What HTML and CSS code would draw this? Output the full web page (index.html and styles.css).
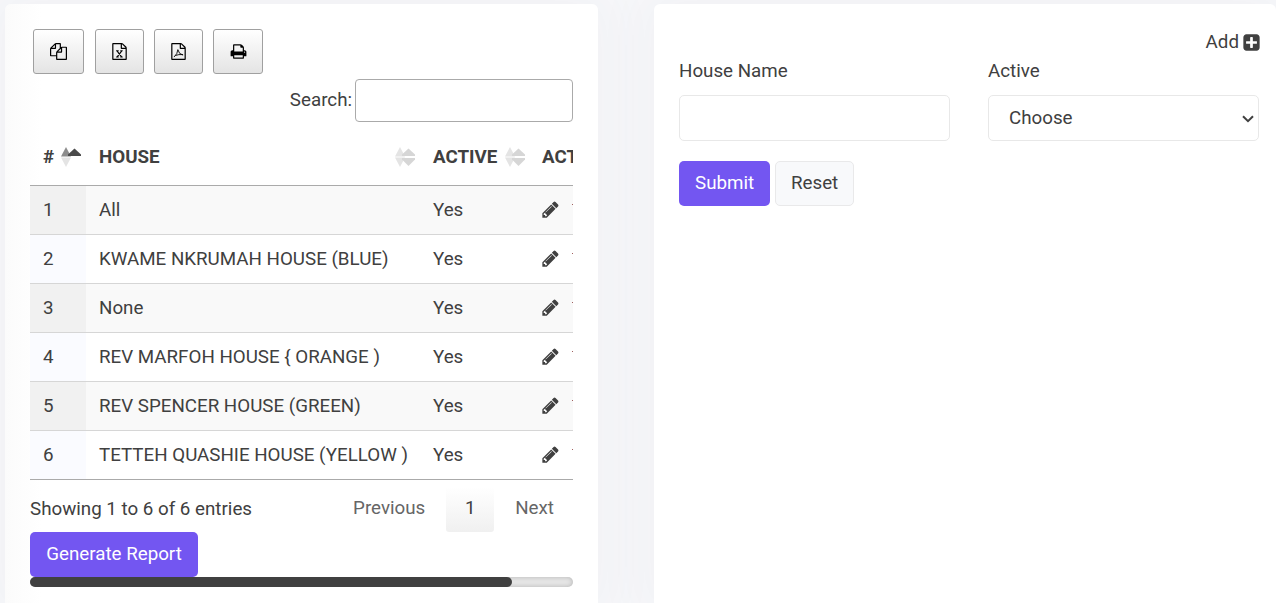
FILE: index.html
```html
<!DOCTYPE html>
<html lang="en">
<head>
<meta charset="utf-8">
<title>Houses</title>
<link rel="stylesheet" href="styles.css">
</head>
<body>
<svg width="0" height="0" class="defs" aria-hidden="true">
  <symbol id="pencil" viewBox="0 0 1792 1792"><path d="M491 1536l91-91-235-235-91 91v107h128v128h107zm523-928q0-22-22-22-10 0-17 7l-542 542q-7 7-7 17 0 22 22 22 10 0 17-7l542-542q7-7 7-17zm-54-192l416 416-832 832h-416v-416zm683 96q0 53-37 90l-166 166-416-416 166-165q36-38 90-38 53 0 91 38l235 234q37 39 37 91z"/></symbol>
  <symbol id="file" viewBox="0 0 1792 1792"><path d="M1596 380q28 28 48 76t20 88v1152q0 40-28 68t-68 28h-1344q-40 0-68-28t-28-68v-1600q0-40 28-68t68-28h896q40 0 88 20t76 48zm-444-244v376h376q-10-29-22-41l-313-313q-12-12-41-22zm384 1528v-1024h-416q-40 0-68-28t-28-68v-416h-768v1536h1280z"/></symbol>
  <symbol id="sort" viewBox="0 0 22 22"><path class="t2" d="M6 21l5-9.500H1z"/><path class="t4" d="M14.500 20L21 13.500V12H8v1.500z"/><path class="t1" d="M6 1l5 9.500H1z"/><path class="t3" d="M14.500 2.500l6.500 6v1.500H8V8.500z"/></symbol>
  <symbol id="sort-asc" viewBox="0 0 22 22"><path fill="#e4e4e4" d="M6 21l5-9.500H1z"/><path fill="#8c8c8c" d="M6 1l5 9.500H1z"/><path fill="#4a4a4a" d="M14.500 2.500l6.500 6v1.500H8V8.500z"/></symbol>
</svg>
<main class="page">
  <section class="card list-card">
    <div class="tools">
      <button class="tool wide"><svg viewBox="0 0 1792 1792"><path d="M1696 384q40 0 68 28t28 68v1216q0 40-28 68t-68 28h-960q-40 0-68-28t-28-68v-288h-544q-40 0-68-28t-28-68v-672q0-40 20-88t48-76l408-408q28-28 76-48t88-20h416q40 0 68 28t28 68v328q68-40 128-40h416zm-544 213l-299 299h299v-299zm-640-384l-299 299h299v-299zm196 647l316-316v-416h-384v416q0 40-28 68t-68 28h-416v640h512v-256q0-40 20-88t48-76zm956 804v-1152h-384v416q0 40-28 68t-68 28h-416v640h896z"/></svg></button>
      <button class="tool"><svg viewBox="0 0 1792 1792"><use href="#file"/><path class="line" d="M630 820L1140 1480M1140 820L630 1480M540 820h270M980 820h250M540 1480h270M980 1480h250"/></svg></button>
      <button class="tool"><svg viewBox="0 0 1792 1792"><use href="#file"/><path class="line thin" d="M830 700Q800 1150 420 1480M830 700Q920 1180 1380 1280M560 1320Q900 1180 1380 1220"/></svg></button>
      <button class="tool print"><svg viewBox="0 0 1792 1792"><path d="M448 1536h896v-256h-896v256zm0-640h896v-384h-160q-40 0-68-28t-28-68v-160h-640v640zm1152 64q0-26-19-45t-45-19-45 19-19 45 19 45 45 19 45-19 19-45zm128 0v416q0 13-9.500 22.500t-22.500 9.500h-224v160q0 40-28 68t-68 28h-960q-40 0-68-28t-28-68v-160h-224q-13 0-22.500-9.500t-9.500-22.500v-416q0-79 56.500-135.500t135.500-56.500h64v-544q0-40 28-68t68-28h672q40 0 88 20t76 48l152 152q28 28 48 76t20 88v256h64q79 0 135.500 56.500t56.500 135.500z"/></svg></button>
    </div>
    <label class="search"><span>Search:</span><input type="text"></label>
    <div class="scroller">
      <table>
        <colgroup><col class="c-num"><col class="c-house"><col class="c-active"><col class="c-action"></colgroup>
        <thead><tr>
          <th><span class="head">#<svg class="sort"><use href="#sort-asc"/></svg></span></th>
          <th><span class="head">HOUSE<svg class="sort"><use href="#sort"/></svg></span></th>
          <th><span class="head">ACTIVE<svg class="sort"><use href="#sort"/></svg></span></th>
          <th>ACTION</th>
        </tr></thead>
        <tbody>
          <tr><td>1</td><td>All</td><td>Yes</td><td><span class="acts"><svg><use href="#pencil"/></svg><i></i></span></td></tr>
          <tr><td>2</td><td>KWAME NKRUMAH HOUSE (BLUE)</td><td>Yes</td><td><span class="acts"><svg><use href="#pencil"/></svg><i></i></span></td></tr>
          <tr><td>3</td><td>None</td><td>Yes</td><td><span class="acts"><svg><use href="#pencil"/></svg><i></i></span></td></tr>
          <tr><td>4</td><td>REV MARFOH HOUSE { ORANGE )</td><td>Yes</td><td><span class="acts"><svg><use href="#pencil"/></svg><i></i></span></td></tr>
          <tr><td>5</td><td>REV SPENCER HOUSE (GREEN)</td><td>Yes</td><td><span class="acts"><svg><use href="#pencil"/></svg><i></i></span></td></tr>
          <tr><td>6</td><td>TETTEH QUASHIE HOUSE (YELLOW )</td><td>Yes</td><td><span class="acts"><svg><use href="#pencil"/></svg><i></i></span></td></tr>
        </tbody>
      </table>
    </div>
    <div class="foot">
      <span class="info">Showing 1 to 6 of 6 entries</span>
      <nav class="pager"><a class="prev">Previous</a><a class="current">1</a><a class="next">Next</a></nav>
    </div>
    <button class="btn primary report">Generate Report</button>
    <div class="bar"><div class="thumb"></div></div>
  </section>
  <section class="card form-card">
    <a class="add">Add <svg viewBox="0 0 1792 1792"><path d="M1408 960v-128q0-26-19-45t-45-19h-320v-320q0-26-19-45t-45-19h-128q-26 0-45 19t-19 45v320h-320q-26 0-45 19t-19 45v128q0 26 19 45t45 19h320v320q0 26 19 45t45 19h128q26 0 45-19t19-45v-320h320q26 0 45-19t19-45zm256-544v960q0 119-84.500 203.500t-203.500 84.500h-960q-119 0-203.500-84.500t-84.500-203.500v-960q0-119 84.500-203.500t203.500-84.500h960q119 0 203.500 84.500t84.500 203.500z"/></svg></a>
    <div class="fields">
      <label>House Name<input type="text"></label>
      <label>Active<span class="select"><select><option>Choose</option></select><svg viewBox="0 0 12 8"><path d="M1 1.200l5 5 5-5"/></svg></span></label>
    </div>
    <div class="buttons"><button class="btn primary">Submit</button><button class="btn light">Reset</button></div>
  </section>
</main>
</body>
</html>
```
FILE: styles.css
```css
* { box-sizing: border-box; }
body { margin: 0; height: 603px; overflow: hidden; background: #f8f9fb; color: #404040; font: 18.75px/28px Roboto, "Liberation Sans", sans-serif; }
.defs { position: absolute; }
button, input, select { font: inherit; color: inherit; }
svg { fill: currentColor; display: block; flex: none; }
.page { display: grid; grid-template-columns: 593px 622px; column-gap: 56px; padding: 4px 0 0 5px; height: 603px; }
.card { height: 599px; background: #fff; border-radius: 6px 6px 0 0; box-shadow: 0 0 48px 16px rgba(82, 63, 105, .04); }
.list-card { padding: 25px 25px 0; background: linear-gradient(90deg, #fbfbfb, #fff 36px); }

.tools { display: flex; gap: 10px; padding-left: 3px; height: 50px; }
.tool { width: 49px; height: 45px; padding: 0 0 1px; border: 1px solid #a0a0a0; border-radius: 3px; background: linear-gradient(#fff, #e4e4e4); color: #000; display: flex; align-items: center; justify-content: center; }
.tool.wide { width: 51px; margin-right: 1px; }
.tool.print { width: 50px; }
.tool svg { width: 17px; height: 17px; }
.tool .line { fill: none; stroke: #000; stroke-width: 120; }
.tool .thin { stroke-width: 95; }

.search { display: flex; justify-content: flex-end; align-items: center; gap: 3px; height: 43px; }
.search span { padding-bottom: 2px; }
.search input { width: 218px; height: 43px; border: 1px solid #aaa; border-radius: 4px; background: #fff; }
.scroller { overflow: hidden; margin-top: 7px; border-bottom: 1px solid #aaa; }
table { table-layout: fixed; width: 635px; border-collapse: separate; border-spacing: 0; }
.c-num { width: 56px; } .c-house { width: 334px; } .c-active { width: 109px; } .c-action { width: 136px; }
th { height: 57px; padding: 0 4px 0 13px; text-align: left; font-weight: 700; border-bottom: 1px solid #aaa; }
th:nth-child(3) { padding-right: 3px; }
.head { display: flex; align-items: center; justify-content: space-between; }
.sort { width: 22px; height: 22px; }
.t1, .t2 { fill: #e4e4e4; } .t3, .t4 { fill: #d6d6d6; }
td { height: 49px; padding: 0 0 1px 13px; border-bottom: 1px solid #d6d6d6; white-space: nowrap; }
tr:last-child td { height: 48px; border-bottom: 0; }
tbody tr:nth-child(odd) td { background: #f9f9f9; }
tbody tr:nth-child(odd) td:first-child { background: #f1f1f1; }
tbody tr:nth-child(even) td:first-child { background: #fafbff; }
.acts { display: flex; align-items: center; }
.acts svg { width: 19px; height: 19px; margin-left: -1px; }
.acts i { width: 8px; height: 1px; margin: 0 0 10px 12px; background: #a0605e; }

.foot { display: flex; justify-content: space-between; height: 52px; padding-top: 7px; }
.info { padding-top: 8px; }
.pager { display: flex; color: #666; line-height: 42px; }
.current { width: 48px; height: 45px; margin: 0 21px; text-align: center; color: #404040; border-radius: 3px; background: linear-gradient(#fff, #f0f0f0); }
.next { padding-right: 19px; }
.btn { height: 45px; padding: 0 16px 2px; border: 0; border-radius: 5px; white-space: nowrap; }
.primary { color: #fff; background: #7356f1; }
.light { border: 1px solid #e9e9ea; background: #f8f9fb; padding: 0 15px 2px; }
.report { display: block; width: 168px; }
.bar { height: 10px; border-radius: 5px; background: #e6e6e6; box-shadow: inset 0 0 5px rgba(0, 0, 0, .22); }
.thumb { width: 482px; height: 10px; border-radius: 5px; background: #404040; }

.form-card { padding: 24px 17px 0 25px; }
.add { display: flex; align-items: center; justify-content: flex-end; gap: 3px; height: 28px; margin: 0 -2px 1px 0; }
.add svg { width: 19px; height: 19px; }
.fields { display: grid; grid-template-columns: 271px 271px; gap: 38px; }
.fields label { display: block; }
.fields input, .fields select { display: block; width: 271px; height: 46px; margin-top: 10px; border: 1px solid #e8e8e8; border-radius: 5px; background: #fff; }
.select { display: block; position: relative; }
.select select { appearance: none; padding: 0 20px; }
.select svg { position: absolute; right: 5px; top: 20px; width: 12px; height: 8px; fill: none; stroke: #404040; stroke-width: 2; }
.buttons { display: flex; gap: 5px; margin-top: 20px; }
.buttons .primary { width: 91px; }
.buttons .light { width: 79px; }
```
